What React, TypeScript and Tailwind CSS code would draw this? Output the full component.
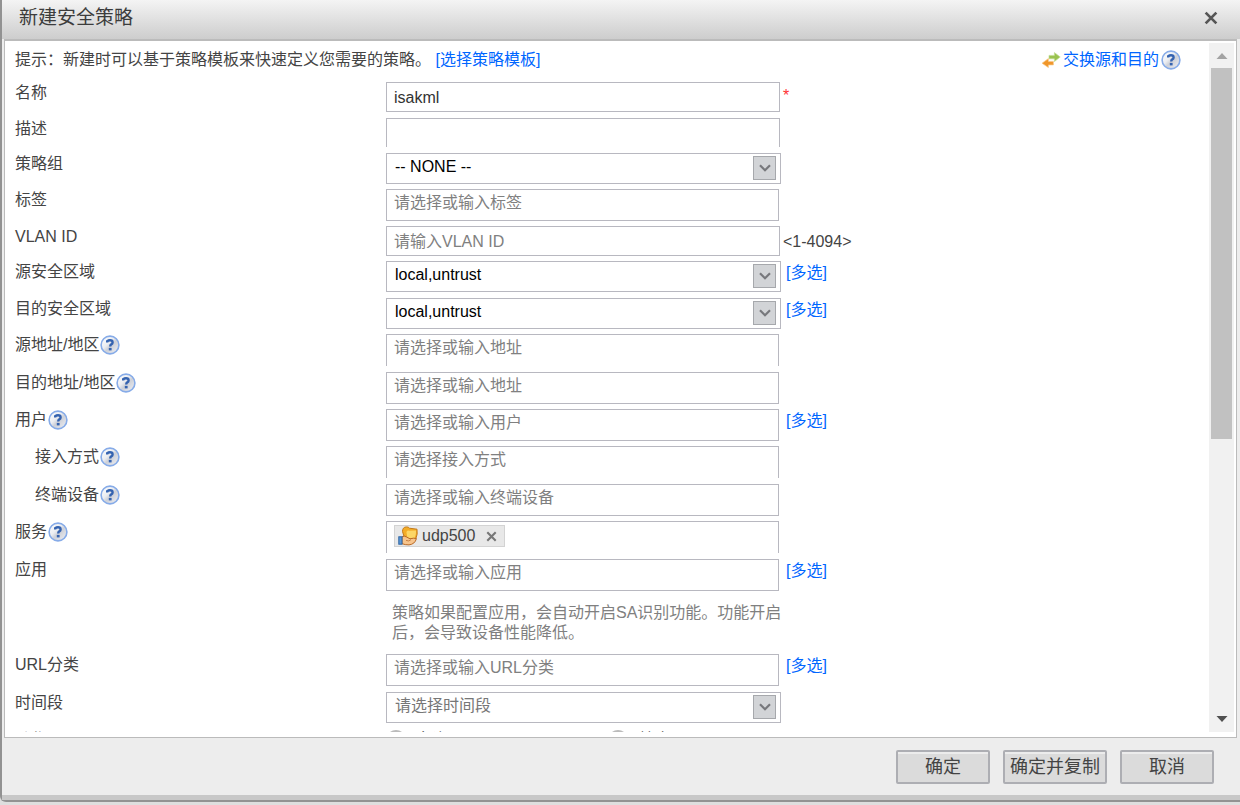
import { type ReactNode, useState } from "react";

const linkClass = "text-[#0066ff] hover:underline";

function HelpIcon() {
  return (
    <svg aria-hidden="true" className="size-5 shrink-0" viewBox="0 0 20 20">
      <defs>
        <linearGradient id="help-fill" x1="0" x2="1" y1="0" y2="1">
          <stop offset="0" stopColor="#ffffff" />
          <stop offset="0.4" stopColor="#eceef2" />
          <stop offset="0.55" stopColor="#cdd0d8" />
          <stop offset="1" stopColor="#f2f3f6" />
        </linearGradient>
      </defs>
      <circle cx="10" cy="10" fill="url(#help-fill)" r="8.9" stroke="#86abe8" strokeWidth="1.6" />
      <path
        d="M7.2 7.4V6.2Q8.4 5.3 10 5.3Q12.6 5.3 12.6 7.4Q12.6 8.7 11.3 9.4Q10.2 10 10.2 11.4"
        fill="none"
        stroke="#3563b0"
        strokeWidth="2.4"
      />
      <rect fill="#3563b0" height="2.5" width="2.8" x="8.8" y="12.9" />
    </svg>
  );
}

function SwapIcon() {
  return (
    <svg aria-hidden="true" className="h-4 w-5 shrink-0" viewBox="0 0 20 16">
      <path d="M8 3.4H13.4V0.6L19.2 5L13.4 9.6V6.8H8Z" fill="#9ac24f" stroke="#c3dc93" strokeWidth="0.7" />
      <path d="M12.4 9.4H7.4V6.6L1 11.2L7.4 15.6V12.9H12.4Z" fill="#f0962a" stroke="#f8c987" strokeWidth="0.7" />
    </svg>
  );
}

function ServiceIcon() {
  return (
    <svg aria-hidden="true" className="size-5 shrink-0" viewBox="0 0 20 20">
      <path d="M4.5 5.5Q4.5 1 8.5 0.9Q10.5 0.8 11.4 2.2L19 3.2Q20 8 17.6 13.4L7 13.6Z" fill="#f3ac27" stroke="#c47a17" />
      <path d="M8.4 6Q9.6 4 11.4 4.8L18 4.6Q18.4 8.6 16.6 12L9.4 12Z" fill="#fcd766" />
      <path d="M4 10.8Q6.5 9.4 8.6 11L12 12.8Q16 11.6 18.4 12.6Q17 18.2 11 18.9Q7 18.9 4 17.7Z" fill="#f7c48c" stroke="#b96a26" />
      <path d="M8 14.4Q11 15.9 13 13.6" fill="none" stroke="#c98243" />
      <rect fill="#5b98d8" height="7.4" stroke="#2e65a3" width="3.2" x="0.8" y="10.8" />
    </svg>
  );
}

function CloseIcon({ className }: { className: string }) {
  return (
    <svg aria-hidden="true" className={className} viewBox="0 0 12 12">
      <path d="M1.4 1.4L10.6 10.6M10.6 1.4L1.4 10.6" stroke="currentColor" strokeWidth="2.3" />
    </svg>
  );
}

function Row({
  children,
  help = false,
  height = "h-[37px]",
  id,
  indent = false,
  label,
}: {
  children: ReactNode;
  help?: boolean;
  height?: string;
  id: string;
  indent?: boolean;
  label: string;
}) {
  return (
    <div className={`flex items-start ${height}`}>
      <div className={`flex h-[22px] w-[371px] shrink-0 items-center ${indent ? "pl-5" : ""}`}>
        <label htmlFor={id}>{label}</label>
        {help ? (
          <button aria-label={`${label}帮助`} className="ml-px" type="button">
            <HelpIcon />
          </button>
        ) : null}
      </div>
      {children}
    </div>
  );
}

function TextField({ id, openBottom = false, placeholder, value = "" }: {
  id: string;
  openBottom?: boolean;
  placeholder?: string;
  value?: string;
}) {
  return (
    <input
      className={`w-[394px] border border-[#b8b8c0] bg-white px-[7px] pt-0.5 text-[#333] outline-none placeholder:text-[#808080] focus:border-[#6a9be0] ${openBottom ? "h-[29px] border-b-0" : "h-[30px]"}`}
      defaultValue={value}
      id={id}
      placeholder={placeholder}
      type="text"
    />
  );
}

function PickerField({ id, openBottom = false, placeholder }: {
  id: string;
  openBottom?: boolean;
  placeholder: string;
}) {
  return (
    <input
      className={`h-8 w-[393px] border border-[#b8b8c0] bg-white px-[7px] outline-none placeholder:text-[#808080] focus:border-[#6a9be0] ${openBottom ? "border-b-0 pb-[5px]" : "pb-1"}`}
      id={id}
      placeholder={placeholder}
      type="text"
    />
  );
}

function SelectField({ id, muted = false, option }: {
  id: string;
  muted?: boolean;
  option: string;
}) {
  return (
    <div className="relative w-[395px]">
      <select
        className={`block h-[31px] w-full appearance-none border border-[#b8b8c0] bg-white px-2 pb-[3px] outline-none ${muted ? "text-[#777]" : "text-black"}`}
        id={id}
      >
        <option>{option}</option>
      </select>
      <span className="pointer-events-none absolute right-[5px] top-[3px] grid h-6 w-[23px] place-items-center border border-[#a6a8ac] bg-[#d2d4d7]">
        <svg aria-hidden="true" className="h-2 w-3" viewBox="0 0 12 8">
          <path d="M1 1.2L6 6.2L11 1.2" fill="none" stroke="#77787c" strokeWidth="2.2" />
        </svg>
      </span>
    </div>
  );
}

function MultiLink({ afterSelect = false }: { afterSelect?: boolean }) {
  return (
    <a className={`leading-6 ${linkClass} ${afterSelect ? "ml-[5px]" : "ml-[7px]"}`} href="#">
      [多选]
    </a>
  );
}

function FooterButton({ children, className }: { children: string; className: string }) {
  return (
    <button
      className={`h-[34px] rounded-xs border-2 border-[#adaeb3] bg-[#dbdbdb] text-lg leading-6 text-[#444] shadow-[inset_0_2px_0_#ececec] hover:bg-[#e4e4e4] ${className}`}
      type="button"
    >
      {children}
    </button>
  );
}

export default function App() {
  const [services, setServices] = useState(["udp500"]);

  return (
    <div className="h-screen bg-[#dedede] pb-[3px] font-['Liberation_Sans','Noto_Sans_CJK_SC',sans-serif] text-base leading-5 text-[#444]">
      <section
        aria-labelledby="dialog-title"
        className="flex h-full flex-col rounded-bl-md border-b-2 border-l-2 border-[#929292] bg-[#ededed]"
        role="dialog"
      >
        <header className="flex h-[39px] shrink-0 items-center justify-between bg-linear-to-b from-[#f4f4f4] to-[#cdcdcd] pb-[3px] pl-[17px] pr-[22px]">
          <h1 className="text-[19px] leading-6 text-[#3c3c3c]" id="dialog-title">
            新建安全策略
          </h1>
          <button aria-label="关闭" className="text-[#555]" type="button">
            <CloseIcon className="size-3.5" />
          </button>
        </header>

        <div className="ml-0.5 mr-[3px] flex min-h-0 flex-1 border border-t-2 border-[#bbb] bg-white pb-[5px] pr-0.5 pt-0.5">
          <form className="min-w-0 flex-1 overflow-hidden pl-2.5">
            <div className="flex h-[39px] items-start justify-between pr-7 pt-[7px]">
              <p>
                提示：新建时可以基于策略模板来快速定义您需要的策略。{" "}
                <a className={linkClass} href="#">
                  [选择策略模板]
                </a>
              </p>
              <div className="flex items-center">
                <a className={`flex items-center gap-0.5 ${linkClass}`} href="#">
                  <SwapIcon />
                  交换源和目的
                </a>
                <button aria-label="帮助" className="ml-0.5" type="button">
                  <HelpIcon />
                </button>
              </div>
            </div>

            <Row height="h-9" id="name" label="名称">
              <TextField id="name" value="isakml" />
              <span className="ml-[3px] leading-7 text-[#f33]">*</span>
            </Row>
            <Row height="h-[35px]" id="description" label="描述">
              <TextField id="description" openBottom />
            </Row>
            <Row height="h-9" id="group" label="策略组">
              <SelectField id="group" option="-- NONE --" />
            </Row>
            <Row id="tag" label="标签">
              <PickerField id="tag" placeholder="请选择或输入标签" />
            </Row>
            <Row height="h-[35px]" id="vlan" label="VLAN ID">
              <TextField id="vlan" placeholder="请输入VLAN ID" />
              <span className="ml-[3px] leading-8">&lt;1-4094&gt;</span>
            </Row>
            <Row id="source-zone" label="源安全区域">
              <SelectField id="source-zone" option="local,untrust" />
              <MultiLink afterSelect />
            </Row>
            <Row height="h-9" id="target-zone" label="目的安全区域">
              <SelectField id="target-zone" option="local,untrust" />
              <MultiLink afterSelect />
            </Row>
            <Row height="h-[38px]" help id="source-address" label="源地址/地区">
              <PickerField id="source-address" openBottom placeholder="请选择或输入地址" />
            </Row>
            <Row help id="target-address" label="目的地址/地区">
              <PickerField id="target-address" placeholder="请选择或输入地址" />
            </Row>
            <Row help id="user" label="用户">
              <PickerField id="user" placeholder="请选择或输入用户" />
              <MultiLink />
            </Row>
            <Row height="h-[38px]" help id="access" indent label="接入方式">
              <PickerField id="access" openBottom placeholder="请选择接入方式" />
            </Row>
            <Row help id="terminal" indent label="终端设备">
              <PickerField id="terminal" placeholder="请选择或输入终端设备" />
            </Row>
            <Row height="h-[38px]" help id="service" label="服务">
              <div className="flex h-8 w-[393px] items-start border border-b-0 border-[#b8b8c0] px-[7px] pt-[3px]">
                {services.map((service) => (
                  <span
                    className="flex h-[22px] shrink-0 items-center border border-[#d3d3d3] bg-[#e8e8e8] pl-[3px] pr-[7px]"
                    key={service}
                  >
                    <ServiceIcon />
                    <span className="ml-1">{service}</span>
                    <button
                      aria-label={`移除${service}`}
                      className="ml-[11px] text-[#777]"
                      onClick={() => setServices(services.filter((item) => item !== service))}
                      type="button"
                    >
                      <CloseIcon className="size-[11px]" />
                    </button>
                  </span>
                ))}
                <input className="min-w-0 flex-1 outline-none" id="service" type="text" />
              </div>
            </Row>
            <Row height="h-[95px]" id="application" label="应用">
              <div>
                <div className="flex items-start">
                  <PickerField id="application" placeholder="请选择或输入应用" />
                  <MultiLink />
                </div>
                <p className="mt-3 w-[397px] pl-1.5 leading-5 text-[#808080]">
                  策略如果配置应用，会自动开启SA识别功能。功能开启后，会导致设备性能降低。
                </p>
              </div>
            </Row>
            <Row height="h-[38px]" id="url" label="URL分类">
              <PickerField id="url" placeholder="请选择或输入URL分类" />
              <MultiLink />
            </Row>
            <Row id="schedule" label="时间段">
              <SelectField id="schedule" muted option="请选择时间段" />
            </Row>
            <Row id="action-permit" label="动作">
              <div className="flex h-[22px]">
                <label className="flex w-[222px] items-center gap-2.5">
                  <input className="size-5 appearance-none rounded-full border-2 border-[#bbb]" id="action-permit" name="action" type="radio" />
                  允许
                </label>
                <label className="flex items-center gap-2.5">
                  <input className="size-5 appearance-none rounded-full border-2 border-[#bbb]" name="action" type="radio" />
                  禁止
                </label>
              </div>
            </Row>
          </form>

          <div aria-hidden="true" className="flex w-[25px] shrink-0 flex-col items-center bg-[#f1f1f1]">
            <svg className="h-[25px] w-3 shrink-0" viewBox="0 0 12 25">
              <path d="M0.5 16L6 10L11.5 16Z" fill="#a3a3a3" />
            </svg>
            <div className="w-[21px] flex-1">
              <div className="h-[58%] bg-[#c1c1c1]" />
            </div>
            <svg className="h-[25px] w-3 shrink-0" viewBox="0 0 12 25">
              <path d="M0.5 9L6 15L11.5 9Z" fill="#505050" />
            </svg>
          </div>
        </div>

        <footer className="flex h-[62px] shrink-0 items-start justify-end gap-[13px] border-b-[5px] border-[#c8c8c8] pr-[26px] pt-3">
          <FooterButton className="w-[94px]">确定</FooterButton>
          <FooterButton className="px-[5px]">确定并复制</FooterButton>
          <FooterButton className="w-[94px]">取消</FooterButton>
        </footer>
      </section>
    </div>
  );
}
